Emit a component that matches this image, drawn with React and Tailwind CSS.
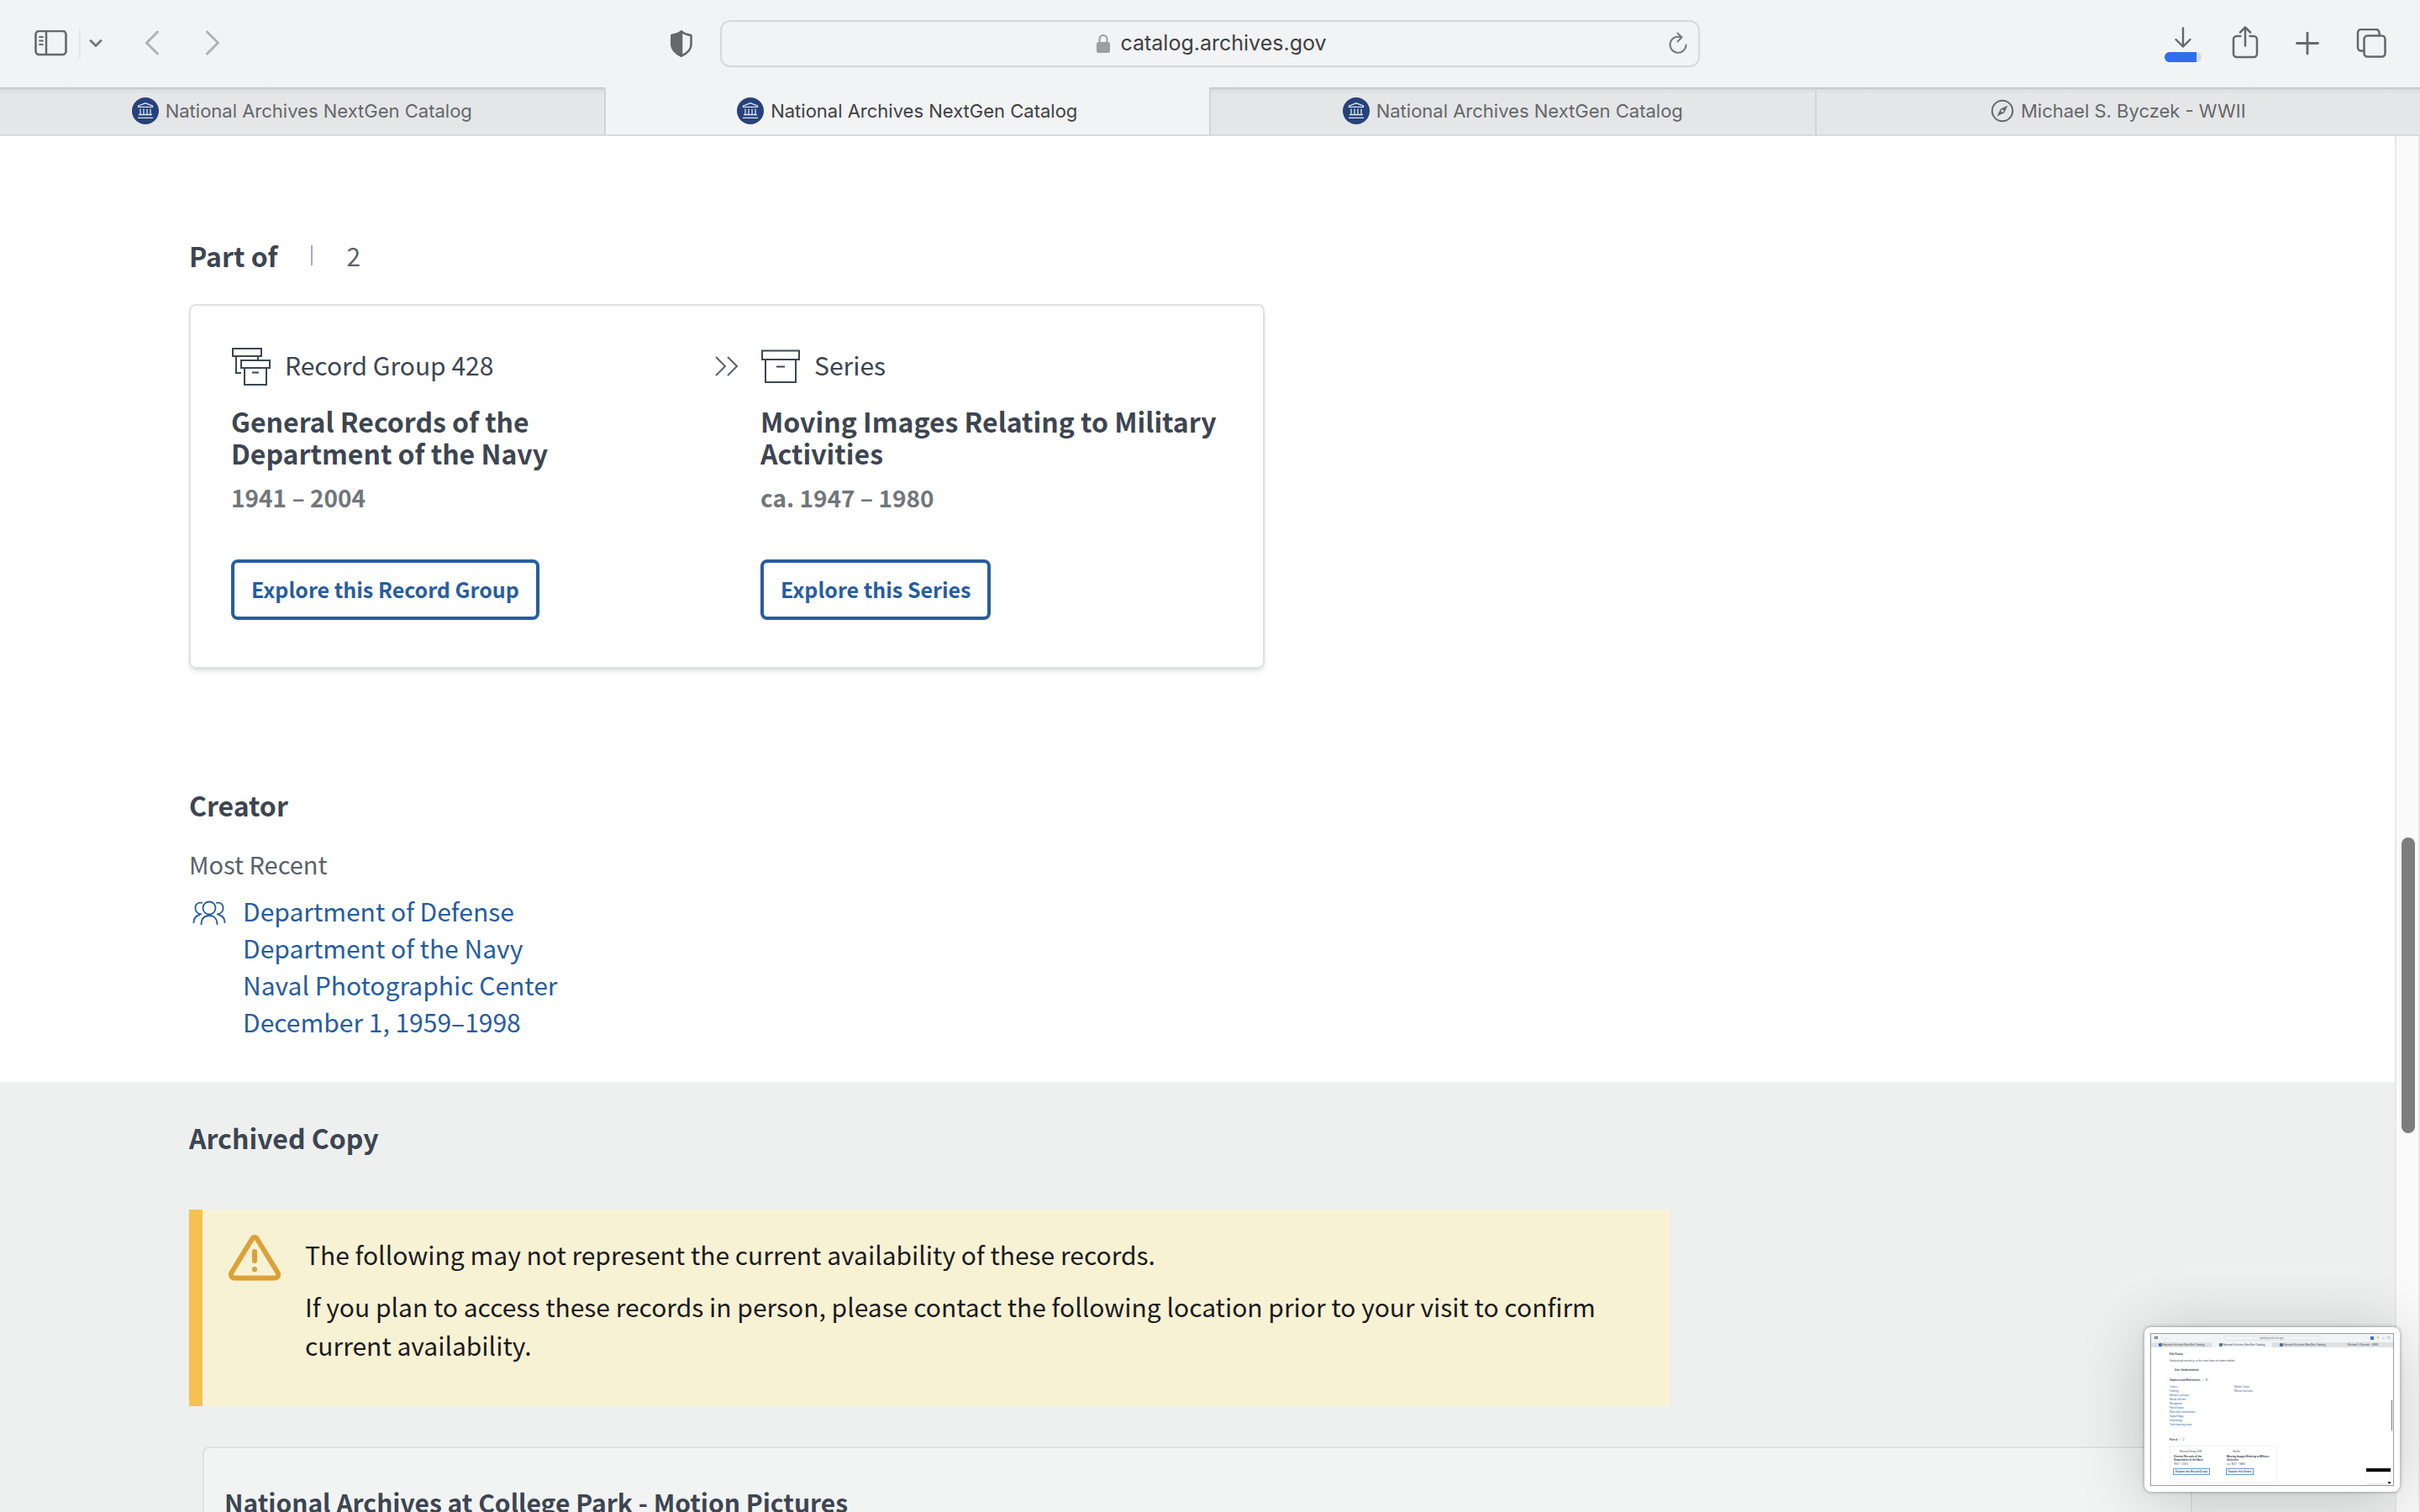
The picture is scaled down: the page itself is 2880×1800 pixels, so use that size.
const TABS = [
  { title: "National Archives NextGen Catalog", icon: "archives" },
  { title: "National Archives NextGen Catalog", icon: "archives", active: true },
  { title: "National Archives NextGen Catalog", icon: "archives" },
  { title: "Michael S. Byczek - WWII", icon: "compass" },
];

const TOPICS = [
  "Fueling",
  "Military convoys",
  "Naval officers",
  "Navigation",
  "Patrol boats",
  "Rites and ceremonies",
  "Signal flags",
  "Swimming",
  "Tank landing ships",
];

const CREATOR = [
  "Department of Defense",
  "Department of the Navy",
  "Naval Photographic Center",
  "December 1, 1959–1998",
];

function SidebarIcon() {
  return (
    <svg className="w-10 h-8" viewBox="0 0 40 32" fill="none" stroke="#666769" strokeWidth="2.600">
      <rect x="2.500" y="1" width="36" height="28" rx="4" />
      <path d="M15 1v28" strokeWidth="2.500" />
      <path d="M7 8h4M7 12.500h4M7 17h4" strokeWidth="1.800" strokeLinecap="round" />
    </svg>
  );
}

function ShieldIcon() {
  return (
    <svg className="w-7 h-8" viewBox="0 0 28 32" fill="none" stroke="#666769" strokeWidth="2.600" strokeLinejoin="round">
      <path d="M14 1.500C10.500 4.500 6.500 5.500 2.500 6v11c0 6 5 10.500 11.500 13.500C20.500 27.500 25.500 23 25.500 17V6C21.500 5.500 17.500 4.500 14 1.500z" />
      <path d="M14 1.500C10.500 4.500 6.500 5.500 2.500 6v11c0 6 5 10.500 11.500 13.500z" fill="#666769" />
    </svg>
  );
}

function LockIcon() {
  return (
    <svg className="w-4 h-6" viewBox="0 0 16 24">
      <rect x="0" y="10" width="16" height="13" rx="2.500" fill="#9d9e9f" />
      <path d="M3.500 11V6.500a4.500 4.500 0 0 1 9 0V11" fill="none" stroke="#9d9e9f" strokeWidth="2" />
    </svg>
  );
}

function ReloadIcon() {
  return (
    <svg className="w-6 h-7" viewBox="0 0 24 28" fill="none" stroke="#77787a" strokeWidth="2" strokeLinecap="round" strokeLinejoin="round">
      <path d="M15 6.200A9.500 9.500 0 1 0 21.500 15.500" />
      <path d="M11.500 1.500l5 5-5 5" />
    </svg>
  );
}

function DownloadIcon() {
  return (
    <svg className="w-11 h-11" viewBox="0 0 44 44" fill="none">
      <path d="M22 3.500v22M13.500 17l8.500 8.500 8.500-8.500" stroke="#666769" strokeWidth="2.400" strokeLinecap="round" strokeLinejoin="round" />
      <rect x="0" y="32" width="44" height="12" rx="6" fill="#d9dadb" />
      <path d="M6 32h32v12H6a6 6 0 0 1 0-12z" fill="#2f6fed" />
    </svg>
  );
}

function ShareIcon() {
  return (
    <svg className="w-8 h-11" viewBox="0 0 32 44" fill="none" stroke="#666769" strokeWidth="2.500" strokeLinecap="round" strokeLinejoin="round">
      <path d="M10.500 13H6a4 4 0 0 0-4 4v17a4 4 0 0 0 4 4h20a4 4 0 0 0 4-4V17a4 4 0 0 0-4-4h-4.500" />
      <path d="M16 24.500V2.500M10 8.500l6-6 6 6" />
    </svg>
  );
}

function PlusIcon() {
  return (
    <svg className="w-7 h-7" viewBox="0 0 28 28" stroke="#666769" strokeWidth="2.800" strokeLinecap="round">
      <path d="M14 1v25M1.500 13.500h25" />
    </svg>
  );
}

function TabsIcon() {
  return (
    <svg className="w-9 h-9" viewBox="0 0 36 36" fill="none" stroke="#666769" strokeWidth="2.500">
      <path d="M9.500 26.500H6a4 4 0 0 1-4-4V5a4 4 0 0 1 4-4h17.500a4 4 0 0 1 4 4v3.500" />
      <rect x="9.500" y="8.500" width="25" height="25" rx="4" />
    </svg>
  );
}

function ArchivesLogo({ className = "w-8 h-8" }) {
  return (
    <svg className={className} viewBox="0 0 32 32">
      <circle cx="16" cy="16" r="16" fill="#25427c" />
      <g fill="none" stroke="#dfe5f1" strokeWidth="1.300">
        <path d="M7.500 10L16 6.800l8.500 3.200v1.300h-17z" />
        <path d="M10 13.500v6.500M14 13.500v6.500M18 13.500v6.500M22 13.500v6.500" />
        <path d="M8 20.500h16M7 24.300h18" />
      </g>
    </svg>
  );
}

function CompassIcon() {
  return (
    <svg className="w-7 h-7" viewBox="0 0 28 28">
      <circle cx="14" cy="14" r="12.200" fill="none" stroke="#666769" strokeWidth="2" />
      <path d="M20.500 7.500l-4.300 8.700-8.700 4.300 4.300-8.700z" fill="#666769" />
      <circle cx="14" cy="14" r="1.600" fill="#e5e6e8" />
    </svg>
  );
}

function RecordGroupIcon() {
  return (
    <svg className="w-12 h-12" viewBox="0 0 48 48" fill="none" stroke="#3d4551" strokeWidth="2">
      <path d="M2 3h34v9H2zM6 12v20h6M32 12v5" />
      <path d="M12 17h34v9H12zM16 26h26v20H16zM25 31.500h8" />
    </svg>
  );
}

function BoxIcon() {
  return (
    <svg className="w-12 h-12" viewBox="0 0 48 48" fill="none" stroke="#3d4551" strokeWidth="2">
      <path d="M2 5.500h44v10.500H2zM6 16h36v27H6zM19 24.500h10" />
    </svg>
  );
}

function DoubleChevron() {
  return (
    <svg className="w-7 h-6" viewBox="0 0 28 24" fill="none" stroke="#5b616b" strokeWidth="2">
      <path d="M1 1l11 11L1 23M15 1l11 11-11 11" />
    </svg>
  );
}

function PeopleIcon() {
  return (
    <svg className="w-10 h-8" viewBox="0 0 40 32" fill="none" stroke="#265d9f" strokeWidth="1.800">
      <circle cx="20" cy="11" r="7.500" />
      <path d="M10.500 31c0-7 3.500-11 9.500-11s9.500 4 9.500 11" />
      <path d="M12 5C6 3.500 3 7 3.500 12c.4 3.500 3 6 7.500 6.500M9 19c-5 1-7.500 5-7.500 10" />
      <path d="M28 5c6-1.500 9 2 8.500 7-.4 3.500-3 6-7.500 6.500M31 19c5 1 7.500 5 7.500 10" />
    </svg>
  );
}

function WarningIcon() {
  return (
    <svg className="w-16 h-14 shrink-0" viewBox="0 0 64 56" fill="none" stroke="#dca137" strokeWidth="6" strokeLinecap="round" strokeLinejoin="round">
      <path d="M29 5L4.500 45c-1.500 3 .2 6.500 3.500 6.500h48c3.300 0 5-3.500 3.500-6.500L35 5c-1.500-2.600-4.500-2.600-6 0z" strokeWidth="6" />
      <path d="M32 20v11M32 41v.2" strokeWidth="6" />
    </svg>
  );
}

function Toolbar() {
  return (
    <header className="flex items-center h-26 shrink-0 px-10 bg-[#f2f3f5]">
      <div className="flex items-center flex-1">
        <button aria-label="Sidebar"><SidebarIcon /></button>
        <div className="w-[2px] h-9 ml-[14px] bg-[#e3e4e6]" />
        <button aria-label="Tab groups" className="ml-[10px]">
          <svg className="w-4 h-3" viewBox="0 0 16 12" fill="none" stroke="#77787a" strokeWidth="3" strokeLinecap="round" strokeLinejoin="round">
            <path d="M2 2.500l6 6 6-6" />
          </svg>
        </button>
        <button aria-label="Back" className="ml-12">
          <svg className="w-5 h-8" viewBox="0 0 20 32" fill="none" stroke="#b1b2b4" strokeWidth="3" strokeLinecap="round" strokeLinejoin="round">
            <path d="M17.500 2L4.500 15l13 13" />
          </svg>
        </button>
        <button aria-label="Forward" className="ml-13">
          <svg className="w-5 h-8" viewBox="0 0 20 32" fill="none" stroke="#b1b2b4" strokeWidth="3" strokeLinecap="round" strokeLinejoin="round">
            <path d="M4.500 2l13 13-13 13" />
          </svg>
        </button>
        <button aria-label="Privacy report" className="ml-auto mr-8"><ShieldIcon /></button>
      </div>
      <div className="flex items-center w-[1166px] h-14 px-3 border-2 border-[#d7d8da] rounded-xl">
        <div className="flex flex-1 items-center justify-center gap-3 pl-7">
          <LockIcon />
          <span className="text-[25px]">catalog.archives.gov</span>
        </div>
        <button aria-label="Reload"><ReloadIcon /></button>
      </div>
      <div className="flex flex-1 items-center justify-end">
        <button aria-label="Downloads"><DownloadIcon /></button>
        <button aria-label="Share" className="ml-9"><ShareIcon /></button>
        <button aria-label="New tab" className="ml-11"><PlusIcon /></button>
        <button aria-label="Tab overview" className="ml-11"><TabsIcon /></button>
      </div>
    </header>
  );
}

function TabBar() {
  return (
    <nav className="flex h-[58px] shrink-0 border-b-2 border-[#d9dadb]">
      {TABS.map((tab, i) => (
        <button
          key={i}
          className={
            tab.active
              ? "flex flex-1 items-center justify-center gap-2 border-r-2 border-[#d3d4d6] bg-[#f2f3f5]"
              : "flex flex-1 items-center justify-center gap-2 border-r-2 border-[#d3d4d6] bg-[linear-gradient(#bfc0c2,#dcdddf_3px,#e5e6e8_7px)] text-[#666769] last:border-r-0"
          }
        >
          {tab.icon === "archives" ? <ArchivesLogo /> : <CompassIcon />}
          <span className="text-[22px]">{tab.title}</span>
        </button>
      ))}
    </nav>
  );
}

function PartOfItem({ icon, level, title, dates, action }) {
  return (
    <div>
      <div className="flex items-center gap-4 h-12">
        {icon}
        <span className="pb-1 text-[30px] leading-10">{level}</span>
      </div>
      <h3 className="mt-[22px] text-[32px] leading-[38px] font-bold">{title}</h3>
      <p className="mt-4 text-[28px] leading-9 font-bold text-[#71767a]">{dates}</p>
      <button className="mt-14 h-18 px-5 border-4 border-[#265d9f] rounded-lg text-[25px] font-bold text-[#265d9f]">
        {action}
      </button>
    </div>
  );
}

function PartOf() {
  return (
    <section>
      <div className="flex items-center gap-10">
        <h2 className="text-[32px] leading-10 font-bold">Part of</h2>
        <div className="w-[2px] h-6 bg-[#a9aeb1]" />
        <span className="text-[30px] leading-10 text-[#5b616b]">2</span>
      </div>
      <div className="grid grid-cols-[1fr_54px_1fr] max-w-7xl mt-[38px] pt-12 pb-14 pl-12 pr-[22px] border-2 border-[#dfe1e2] rounded-lg shadow-md">
        <PartOfItem
          icon={<RecordGroupIcon />}
          level="Record Group 428"
          title={<>General Records of the<br />Department of the Navy</>}
          dates="1941 – 2004"
          action="Explore this Record Group"
        />
        <div className="flex items-center h-12"><DoubleChevron /></div>
        <PartOfItem
          icon={<BoxIcon />}
          level="Series"
          title={<>Moving Images Relating to Military<br />Activities</>}
          dates="ca. 1947 – 1980"
          action="Explore this Series"
        />
      </div>
    </section>
  );
}

function Creator() {
  return (
    <section className="mt-[142px]">
      <h2 className="text-[32px] leading-10 font-bold">Creator</h2>
      <p className="mt-[30px] text-[29px] leading-10 text-[#5b616b]">Most Recent</p>
      <a href="#creator" className="flex items-start gap-5 mt-[14px] pl-1 text-[#265d9f]">
        <span className="flex items-center h-12"><PeopleIcon /></span>
        <span className="text-[30px] leading-11">
          {CREATOR.map((line) => (
            <span key={line} className="block">{line}</span>
          ))}
        </span>
      </a>
    </section>
  );
}

function ArchivedCopy() {
  return (
    <section className="grow pt-[46px] bg-[#eef0ef]">
      <h2 className="ml-[225px] text-[32px] leading-10 font-bold">Archived Copy</h2>
      <div className="flex gap-7 max-w-[1762px] mt-[66px] ml-[225px] pt-[30px] pb-[50px] pl-[30px] border-l-16 border-[#f5c150] bg-[#f8f2d5]">
        <WarningIcon />
        <div className="text-[30px] leading-[46px] text-[#1b1b1b]">
          <p>The following may not represent the current availability of these records.</p>
          <p className="mt-4">
            If you plan to access these records in person, please contact the following location prior to your visit to confirm<br />
            current availability.
          </p>
        </div>
      </div>
      <div className="mt-12 mx-[241px] px-6 py-11 border-2 border-[#dfe1e0] rounded-lg bg-[#f2f4f3]">
        <h3 className="text-[30px] leading-10 font-bold">National Archives at College Park - Motion Pictures</h3>
      </div>
    </section>
  );
}

function Scrollbar() {
  return (
    <div className="relative w-[30px] shrink-0 border-x-2 border-[#e8e8e8] bg-[#fafafa]">
      <div className="absolute top-[51%] right-1 w-4 h-88 rounded-full bg-[#7d7d7d]" />
    </div>
  );
}

// Small floating preview of the last capture
function Preview() {
  return (
    <aside className="absolute right-6 bottom-6 w-76 p-2 rounded-lg bg-white shadow-[0_0_4px_#00000066,0_8px_80px_#00000033]">
      <div className="relative h-45 overflow-hidden outline outline-[#9b9c9d] bg-white text-[3px] leading-[5px] text-[#3d4551]">
        <div className="flex items-center justify-between h-[10px] px-1 bg-[#f2f3f5] text-[#666769]">
          <span className="flex gap-1"><span className="w-1 h-[3px] border border-[#666769]" /><span>‹</span><span>›</span></span>
          <span className="w-29 h-[6px] ml-2 rounded-sm border border-[#e3e4e6] text-center leading-[4px]">catalog.archives.gov</span>
          <span className="flex gap-1"><span className="w-1 h-1 bg-[#2f6fed]" /><span>↑</span><span>+</span><span>□</span></span>
        </div>
        <div className="flex h-[6px]">
          {TABS.map((tab, i) => (
            <div key={i} className={tab.active ? "flex flex-1 items-center justify-center gap-px bg-[#f2f3f5]" : "flex flex-1 items-center justify-center gap-px bg-[#dfe0e2]"}>
              {tab.icon === "archives" && <ArchivesLogo className="w-1 h-1" />}
              <span>{tab.title}</span>
            </div>
          ))}
        </div>
        <div className="px-[22px] pt-[6px]">
          <p className="font-bold">Edit Status</p>
          <p className="mt-[3px]">Audiovisual record(s) in this item have not been edited.</p>
          <p className="mt-[6px] pl-[6px] font-bold">Use: Undetermined</p>
          <p className="mt-[7px]"><b>Subjects and References</b> &nbsp; | &nbsp; 10</p>
          <div className="flex mt-[3px] text-[#265d9f]">
            <div className="w-[77px]">
              <p className="text-[#5b616b]">Topics</p>
              {TOPICS.map((topic) => <p key={topic}>{topic}</p>)}
            </div>
            <div>
              <p className="text-[#5b616b]">Media Types</p>
              <p>Motion pictures</p>
            </div>
          </div>
          <p className="mt-[13px]"><b>Part of</b> &nbsp; | &nbsp; 2</p>
          <div className="flex w-32 h-11 mt-1 p-1 border border-[#eeeff0] leading-[4px]">
            <div className="w-[63px]">
              <p className="pl-[7px]">Record Group 428</p>
              <p className="mt-[2px] font-bold">General Records of the<br />Department of the Navy</p>
              <p className="mt-px">1941 – 2004</p>
              <p className="mt-1 w-fit px-[2px] py-px outline outline-[#6f95c5] font-bold text-[#265d9f]">Explore this Record Group</p>
            </div>
            <div>
              <p className="pl-[7px]">Series</p>
              <p className="mt-[2px] font-bold whitespace-nowrap">Moving Images Relating to Military<br />Activities</p>
              <p className="mt-px">ca. 1947 – 1980</p>
              <p className="mt-1 w-fit px-[2px] py-px outline outline-[#6f95c5] font-bold text-[#265d9f]">Explore this Series</p>
            </div>
          </div>
        </div>
        <div className="absolute right-px top-[79px] w-px h-9 bg-[#7b7b7b]" />
        <div className="absolute right-[3px] bottom-[2px] w-[29px] h-[18px] border-t-4 border-black bg-white shadow-sm">
          <div className="absolute right-0 bottom-0 w-[3px] h-[2px] bg-black" />
        </div>
      </div>
    </aside>
  );
}

function App() {
  return (
    <div className="relative flex flex-col h-screen overflow-hidden bg-white text-[#3f4042] font-['Inter',sans-serif]">
      <Toolbar />
      <TabBar />
      <div className="flex grow min-h-0">
        <main className="flex flex-col grow min-w-0 overflow-hidden text-[#3d4551] font-['Noto_Sans_CJK_SC',sans-serif]">
          <div className="shrink-0 px-[225px] pt-[122px] pb-[50px]">
            <PartOf />
            <Creator />
          </div>
          <ArchivedCopy />
        </main>
        <Scrollbar />
      </div>
      <Preview />
    </div>
  );
}

export default App;
